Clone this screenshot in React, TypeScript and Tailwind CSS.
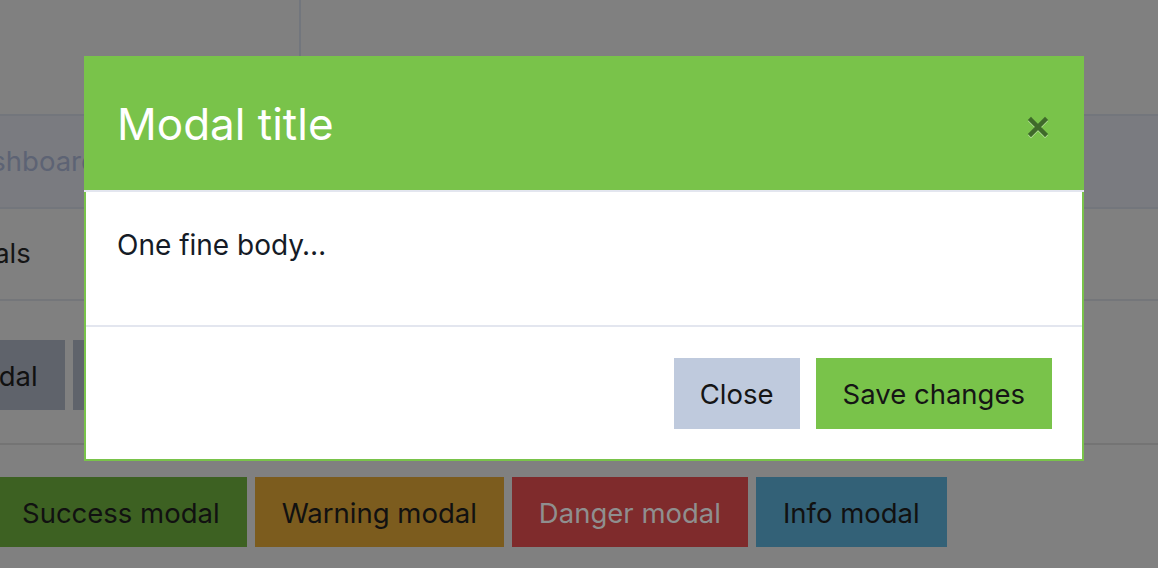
import React from "react";

const font = { fontFamily: "Inter, 'Noto Sans', sans-serif" };

const bottomButtons = [
  { label: "Success modal", cls: "bg-[#3d6122] text-[#111111]" },
  { label: "Warning modal", cls: "bg-[#7c5c1e] text-[#111111]" },
  { label: "Danger modal", cls: "bg-[#7f2b2c] text-[#8f8f8f]" },
  { label: "Info modal", cls: "bg-[#336177] text-[#111111]" },
];

const CloseIcon = () => (
  <svg width="24" height="24" viewBox="0 0 24 24" className="block">
    <path d="M5 6 L19 20 M19 6 L5 20" stroke="#b9e39f" strokeWidth="4.5" strokeLinecap="square" />
    <path d="M5 5 L19 19 M19 5 L5 19" stroke="#3f6a2a" strokeWidth="4.5" strokeLinecap="square" />
  </svg>
);

export default function App() {
  return (
    <div className="relative w-[1158px] h-[568px] overflow-hidden bg-[#808080]" style={font}>
      {/* page behind the backdrop */}
      <div className="flex flex-col text-[27.5px] whitespace-nowrap">
        <div className="h-[114px] flex">
          <div className="w-[301px] h-full border-r-2 border-[#72767d]" />
        </div>
        <div className="h-[93px] bg-[#7a7b80] border-t-2 border-[#73767c] flex items-center">
          <span className="ml-[-44px] text-[#5d6374]">Dashboard</span>
        </div>
        <div className="h-[92px] border-t-2 border-[#73767c] flex items-center">
          <span className="ml-[-64px] text-[#151515]">Modals</span>
        </div>
        <div className="h-[144px] border-t-2 border-[#74767a] flex items-start pt-[39px] gap-2">
          <div className="ml-[-170px] h-[70px] px-[27px] pt-[3px] bg-[#5f636b] flex items-center text-[#111111]">
            Default modal
          </div>
          <div className="h-[70px] w-[200px] bg-[#5f636b]" />
        </div>
        <div className="border-t-2 border-[#747474] pt-[32px] flex gap-2 ml-[-5px]">
          {bottomButtons.map((b) => (
            <div key={b.label} className={`h-[70px] px-[27px] pt-[3px] flex items-center ${b.cls}`}>
              {b.label}
            </div>
          ))}
        </div>
      </div>

      {/* modal */}
      <div className="absolute left-[84px] top-[56px] w-[1000px] border-2 border-[#79c34a] bg-white">
        <div className="h-[136px] mt-[-2px] mx-[-2px] pt-[2px] bg-[#79c34a] border-b-2 border-[#e3e6ef] flex items-center justify-between pl-[33px] pr-[30px]">
          <h4 className="text-[44px] text-white leading-none">Modal title</h4>
          <button className="p-1 mt-[6px]">
            <CloseIcon />
          </button>
        </div>
        <div className="px-[31px] pt-[32px] pb-[59px] border-b-2 border-[#e3e6ef]">
          <p className="text-[28px] leading-[42px] text-[#151b26]">One fine body…</p>
        </div>
        <div className="flex justify-end gap-4 pt-[31px] pb-[30px] pr-[30px] text-[27.5px] text-[#151515]">
          <button className="h-[71px] px-[26px] pt-[3px] bg-[#bfcadd]">Close</button>
          <button className="h-[71px] px-[27px] pt-[3px] bg-[#79c34a]">Save changes</button>
        </div>
      </div>
    </div>
  );
}
